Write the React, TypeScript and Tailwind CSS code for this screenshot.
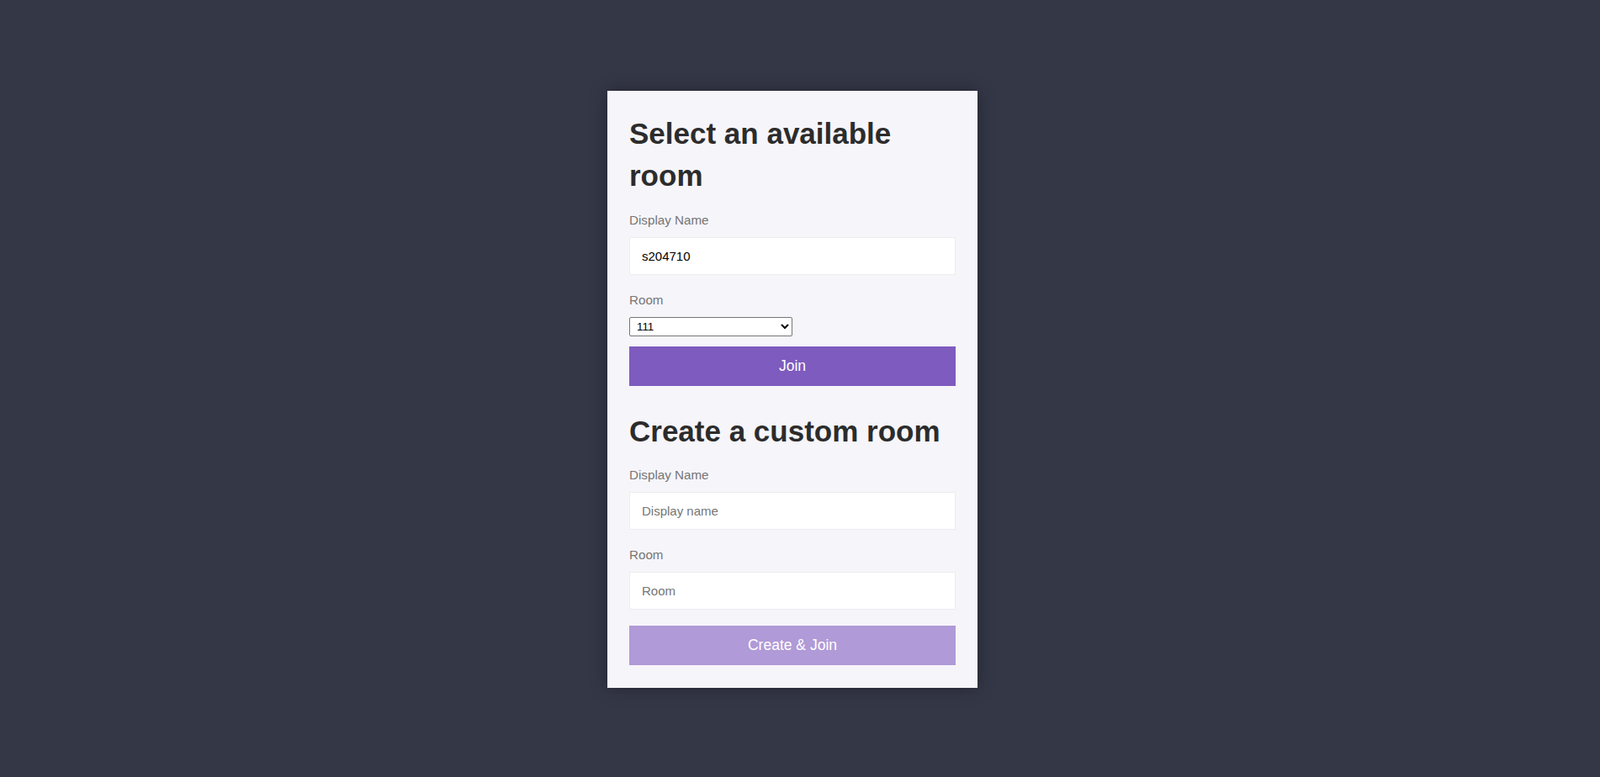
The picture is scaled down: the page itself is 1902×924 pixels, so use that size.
import React, { useState } from 'react';

const rooms = ['111', '112', '204', 'lobby'];

// Room picker card
const App: React.FC = () => {
  const [name, setName] = useState('s204710');
  const [room, setRoom] = useState(rooms[0]);
  const [customName, setCustomName] = useState('');
  const [customRoom, setCustomRoom] = useState('');

  const canCreate = customName.trim() !== '' && customRoom.trim() !== '';

  return (
    <div className="min-h-screen bg-[#343746] pt-[108px] pb-[106px] pr-[18px] flex justify-center font-['Liberation_Sans',Arial,sans-serif]">
      <div className="w-[440px] bg-[#f6f5fa] px-[26px] pt-[26px] pb-[27px] shadow-[0_0_18px_rgba(0,0,0,0.35)] self-start">
        {/* Available rooms */}
        <h1 className="text-[35px] leading-[50px] font-bold text-[#2c2c2c]">Select an available room</h1>

        <label className="block mt-[19px] text-[15.2px] leading-[17px] text-[#767676]">Display Name</label>
        <input
          value={name}
          onChange={(e) => setName(e.target.value)}
          className="mt-[12px] block w-full h-[45px] bg-white border border-[#ececf0] px-[14px] text-[15px] text-black outline-none"
        />

        <label className="block mt-[21px] text-[15.2px] leading-[17px] text-[#767676]">Room</label>
        <select
          value={room}
          onChange={(e) => setRoom(e.target.value)}
          className="mt-[12px] block w-[194px] h-[23px] bg-white border border-[#767676] rounded-[2px] text-[13.33px] text-black pl-[4px] appearance-auto"
        >
          {rooms.map((r) => (
            <option key={r} value={r}>{r}</option>
          ))}
        </select>

        <button className="mt-[12px] block w-full h-[47px] bg-[#7e5bbe] text-white text-[17.5px]">Join</button>

        {/* Custom room */}
        <h1 className="mt-[29px] text-[35px] leading-[50px] font-bold text-[#2c2c2c]">Create a custom room</h1>

        <label className="block mt-[18px] text-[15.2px] leading-[17px] text-[#767676]">Display Name</label>
        <input
          value={customName}
          onChange={(e) => setCustomName(e.target.value)}
          placeholder="Display name"
          className="mt-[12px] block w-full h-[45px] bg-white border border-[#ececf0] px-[14px] text-[15px] text-black placeholder:text-[#767676] outline-none"
        />

        <label className="block mt-[21px] text-[15.2px] leading-[17px] text-[#767676]">Room</label>
        <input
          value={customRoom}
          onChange={(e) => setCustomRoom(e.target.value)}
          placeholder="Room"
          className="mt-[12px] block w-full h-[45px] bg-white border border-[#ececf0] px-[14px] text-[15px] text-black placeholder:text-[#767676] outline-none"
        />

        <button
          disabled={!canCreate}
          className={`mt-[19px] block w-full h-[47px] text-white text-[17.5px] ${canCreate ? 'bg-[#7e5bbe]' : 'bg-[#b09ad7]'}`}
        >
          Create &amp; Join
        </button>
      </div>
    </div>
  );
};

export default App;
